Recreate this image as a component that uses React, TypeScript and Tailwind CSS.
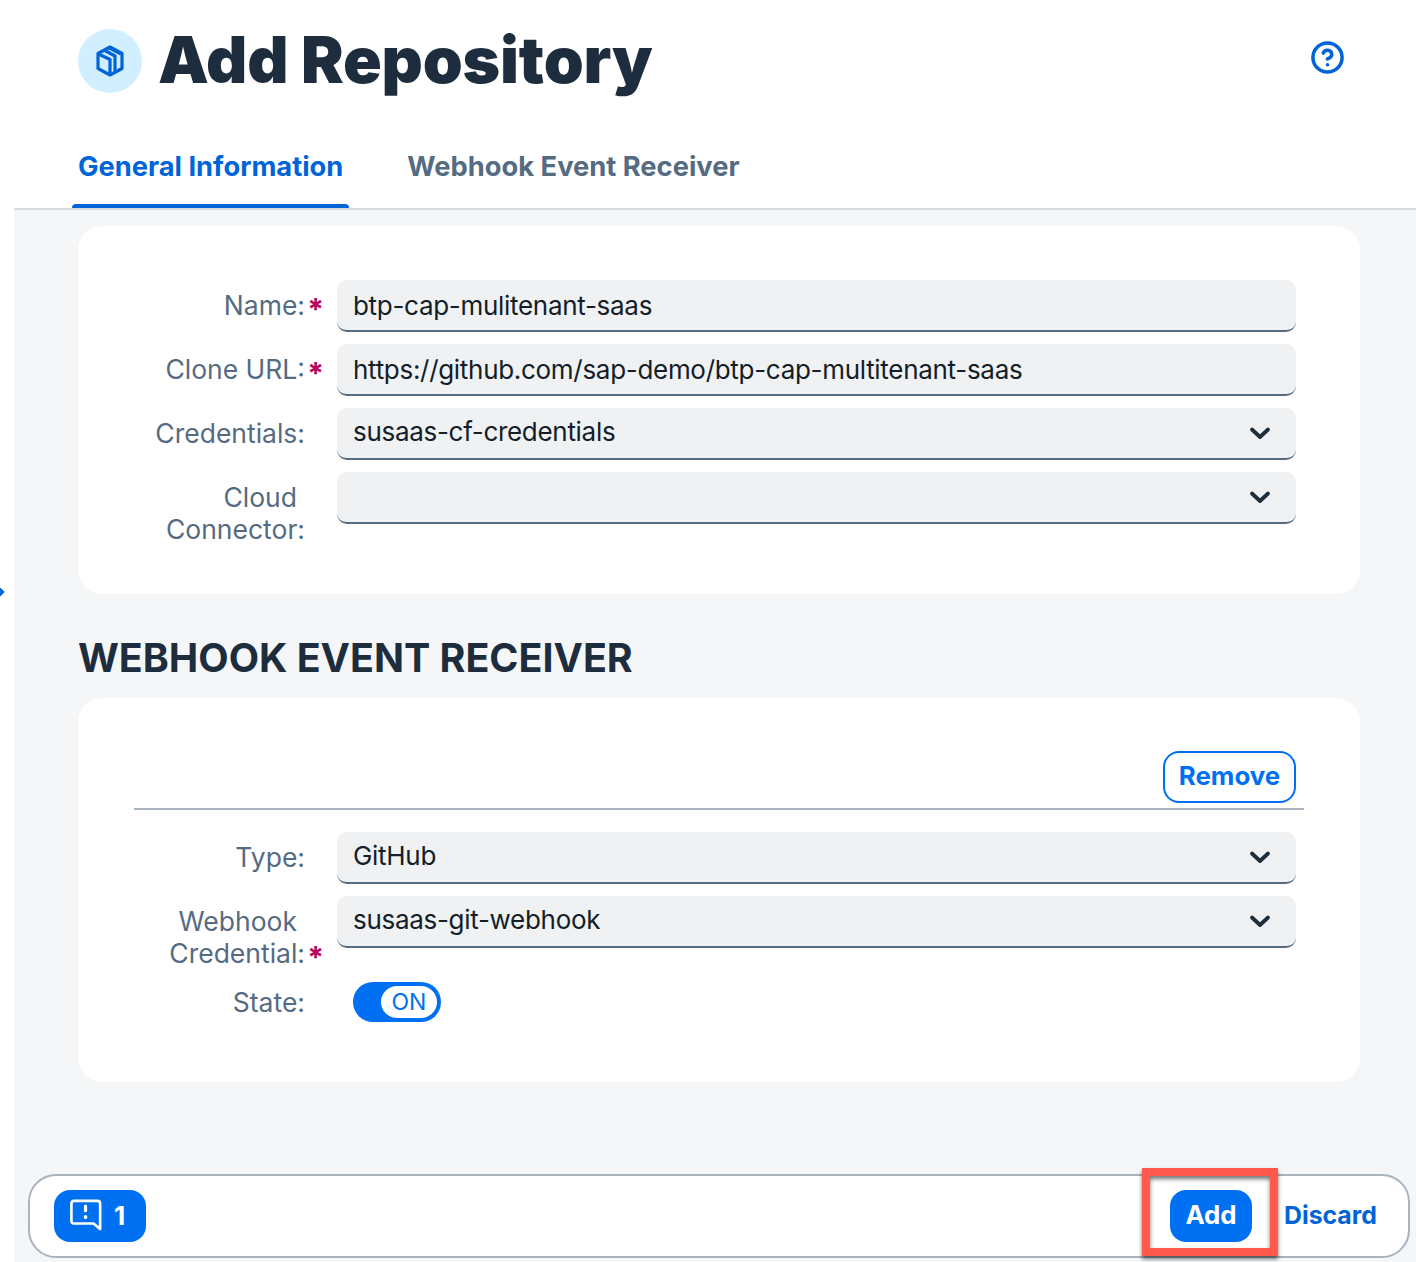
import { CircleHelp } from "lucide-react";

const font = { fontFamily: 'Inter, sans-serif' };

function Chevron() {
  return (
    <svg width="22" height="14" viewBox="0 0 22 14" fill="none" className="shrink-0">
      <path d="M3 3.5 L11 11 L19 3.5" stroke="#1d2d3e" strokeWidth="3.8" strokeLinecap="round" strokeLinejoin="round" />
    </svg>
  );
}

function Field({ value, select }: { value: string; select?: boolean }) {
  return (
    <div className="flex h-[52px] w-[959px] shrink-0 items-center justify-between rounded-[10px] border-b-2 border-[#556b82] bg-[#eff1f2] pl-4 pr-[25px] text-[26px] tracking-[-0.3px] text-[#131e29]">
      <span className={select ? "pb-[3px]" : ""}>{value}</span>
      {select ? <Chevron /> : null}
    </div>
  );
}

function Label({ lines, required }: { lines: string[]; required?: boolean }) {
  return (
    <div className="relative w-[259px] shrink-0 pr-8 pt-[9px] text-right text-[26.5px] leading-8 text-[#556b82]">
      {lines.map((l, i) => (
        <div key={l} className={i < lines.length - 1 ? "pr-2" : ""}>
          {l}
        </div>
      ))}
      {required ? (
        <span className="absolute bottom-[-4px] right-[13px] text-[30px] font-bold leading-8 text-[#bb0066]">*</span>
      ) : null}
    </div>
  );
}

function Row({ lines, value, required, select }: { lines: string[]; value: string; required?: boolean; select?: boolean }) {
  return (
    <div className="flex items-start">
      <Label lines={lines} required={required} />
      <Field value={value} select={select} />
    </div>
  );
}

export default function App() {
  return (
    <div style={font} className="relative flex h-[1262px] w-[1416px] overflow-hidden bg-white">
      <div className="relative w-[14px] shrink-0">
        <div className="absolute left-[-5px] top-[588px] h-2 w-2 rotate-45 bg-[#0064d9]" />
      </div>
      <main className="flex min-w-0 flex-1 flex-col bg-[#f5f6f7]">
        <header className="flex h-[210px] shrink-0 flex-col border-b-2 border-[#d9dcdf] bg-white pl-[64px] pr-[72px]">
          <div className="flex h-[122px] items-start justify-between pt-[29px]">
            <div className="flex items-start gap-4">
              <div className="flex h-16 w-16 items-center justify-center rounded-full bg-[#d1efff]">
                <svg width="28" height="32" viewBox="0 0 28 32" fill="none" stroke="#0064d9" strokeWidth="3.2" strokeLinejoin="round">
                  <path d="M14 2 L26 8.5 V23.5 L14 30 L2 23.5 V8.5 Z" />
                  <path d="M2.5 9 L14 14.5 V30" />
                  <path d="M8 5 L19 11 V26.5" />
                  <path d="M13.5 3 L25 9" />
                </svg>
              </div>
              <h1 className="mt-[-13px] text-[64px] font-black leading-[88px] tracking-[-0.15px] text-[#1d2d3e]">Add Repository</h1>
            </div>
            <CircleHelp size={35} strokeWidth={2.4} className="mr-[-1px] mt-[11px] text-[#0064d9]" />
          </div>
          <nav className="flex items-start gap-[64px] text-[27.3px] font-bold leading-8">
            <div className="relative pt-[29px] text-[#0064d9]">
              General Information
              <div className="absolute bottom-[-25px] left-[-6px] right-[-6px] h-1 rounded-t bg-[#0064d9]" />
            </div>
            <div className="pt-[29px] text-[#556b82]">Webhook Event Receiver</div>
          </nav>
        </header>

        <div className="flex flex-col pl-[64px] pr-14 pt-4">
          <section className="flex h-[368px] flex-col gap-3 rounded-[24px] bg-white pt-[54px]">
            <Row lines={["Name:"]} value="btp-cap-mulitenant-saas" required />
            <Row lines={["Clone URL:"]} value="https://github.com/sap-demo/btp-cap-multitenant-saas" required />
            <Row lines={["Credentials:"]} value="susaas-cf-credentials" select />
            <Row lines={["Cloud", "Connector:"]} value="" select />
          </section>

          <h2 className="mb-[17px] mt-[41px] text-[39.4px] font-bold leading-[46px] text-[#1d2d3e]">WEBHOOK EVENT RECEIVER</h2>

          <section className="flex h-[384px] flex-col rounded-[24px] bg-white pt-[53px]">
            <div className="ml-[56px] mr-[56px] flex justify-end border-b-2 border-[#a9b4be] pb-[5px] pr-2">
              <button className="h-[52px] w-[133px] rounded-[16px] border-2 border-[#0070f2] pb-[2px] text-[25.8px] font-bold text-[#0070f2]">Remove</button>
            </div>
            <div className="mt-[22px] flex flex-col gap-3">
              <Row lines={["Type:"]} value="GitHub" select />
              <Row lines={["Webhook", "Credential:"]} value="susaas-git-webhook" required select />
              <div className="flex items-start">
                <div className="w-[259px] shrink-0 pr-8 pt-[5px] text-right text-[26.5px] leading-8 text-[#556b82]">State:</div>
                <div className="ml-4 mt-px flex h-10 w-[88px] items-center justify-end rounded-full bg-[#0070f2] pr-1">
                  <div className="flex h-8 w-14 items-center justify-center rounded-full bg-white text-[23px] text-[#0070f2]">ON</div>
                </div>
              </div>
            </div>
          </section>
        </div>

        <footer className="ml-[14px] mr-[6px] mt-[92px] flex h-[84px] items-center justify-between rounded-[28px] border-2 border-[#a9b4be] bg-white pl-6 pr-8">
          <button className="flex h-[52px] w-[92px] items-center gap-3 rounded-[16px] bg-[#0070f2] pl-4 pb-[2px] text-[26px] font-bold text-white">
            <svg width="32" height="32" viewBox="0 0 34 34" fill="none" stroke="white" strokeWidth="2.8" strokeLinejoin="round" strokeLinecap="round" className="shrink-0">
              <path d="M4 2 H29 Q32 2 32 5 V32 L25 26 H4 Q1.5 26 1.5 23 V5 Q1.5 2 4 2 Z" />
              <path d="M16.5 7.5 V12.5" strokeWidth="3.4" />
              <path d="M16.5 19 V19.5" strokeWidth="3.8" />
            </svg>
            1
          </button>
          <div className="flex items-center gap-8">
            <button className="h-[52px] w-[82px] rounded-[16px] bg-[#0070f2] pb-px text-[25.8px] font-bold text-white">Add</button>
            <button className="w-[92px] whitespace-nowrap pb-px text-right text-[24.8px] font-bold text-[#0064d9]">Discard</button>
          </div>
        </footer>
      </main>
      <div className="absolute left-[1142px] top-[1168px] h-[88px] w-[136px] border-[8px] border-[#ff5a4d] shadow-[0_3px_4px_rgba(0,0,0,0.55),inset_0_3px_4px_rgba(0,0,0,0.55)]" />
    </div>
  );
}
